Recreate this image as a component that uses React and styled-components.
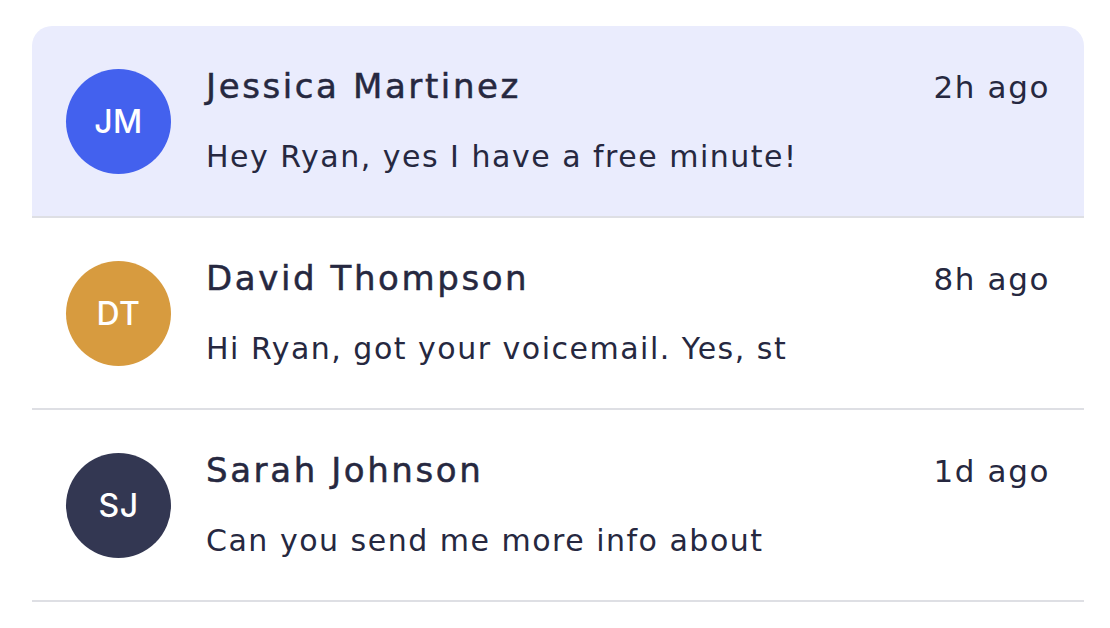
import React from "react";
import styled, { createGlobalStyle } from "styled-components";

const Global = createGlobalStyle`
  html, body { margin: 0; padding: 0; background: #ffffff; }
  body { font-family: "DejaVu Sans", "Liberation Sans", sans-serif; }
`;

const Page = styled.div`
  padding: 26px 26px 0 32px;
`;

const List = styled.ul`
  list-style: none;
  margin: 0;
  padding: 0;
  display: flex;
  flex-direction: column;
`;

const Row = styled.li`
  height: 190px;
  box-sizing: content-box;
  display: flex;
  align-items: center;
  padding: 0 34px;
  background: ${(p) => (p.$active ? "#eaecfd" : "#ffffff")};
  border-radius: ${(p) => (p.$active ? "20px 20px 0 0" : "0")};
  border-bottom: 2px solid #dedfe4;
`;

const Avatar = styled.div`
  width: 105px;
  height: 105px;
  flex: none;
  border-radius: 50%;
  background: ${(p) => p.$color};
  color: #ffffff;
  display: flex;
  align-items: center;
  justify-content: center;
  font-family: Inter, "Liberation Sans", sans-serif;
  font-weight: 500;
  font-size: 32px;
  letter-spacing: 0.5px;
`;

const Body = styled.div`
  flex: 1;
  min-width: 0;
  margin-left: 35px;
  display: flex;
  flex-direction: column;
  gap: 28px;
`;

const Top = styled.div`
  display: flex;
  justify-content: space-between;
  align-items: baseline;
`;

const Name = styled.div`
  font-size: 34px;
  font-weight: 400;
  -webkit-text-stroke: 0.5px #262840;
  letter-spacing: 2.6px;
  color: #262840;
  line-height: 44px;
  margin-top: -4px;
`;

const Time = styled.div`
  font-size: 31px;
  font-weight: 400;
  letter-spacing: 1.6px;
  color: #262840;
  line-height: 44px;
`;

const Message = styled.div`
  font-size: 30px;
  font-weight: 400;
  letter-spacing: 1.5px;
  color: #262840;
  line-height: 40px;
  white-space: nowrap;
  overflow: hidden;
`;

const items = [
  { initials: "JM", color: "#4361ee", name: "Jessica Martinez", time: "2h ago", msg: "Hey Ryan, yes I have a free minute!", active: true },
  { initials: "DT", color: "#d79b3f", name: "David Thompson", time: "8h ago", msg: "Hi Ryan, got your voicemail. Yes, st" },
  { initials: "SJ", color: "#333752", name: "Sarah Johnson", time: "1d ago", msg: "Can you send me more info about" },
];

export default function App() {
  return (
    <Page>
      <Global />
      <List>
        {items.map((it) => (
          <Row key={it.initials} $active={it.active}>
            <Avatar $color={it.color}>{it.initials}</Avatar>
            <Body>
              <Top>
                <Name>{it.name}</Name>
                <Time>{it.time}</Time>
              </Top>
              <Message>{it.msg}</Message>
            </Body>
          </Row>
        ))}
      </List>
    </Page>
  );
}
